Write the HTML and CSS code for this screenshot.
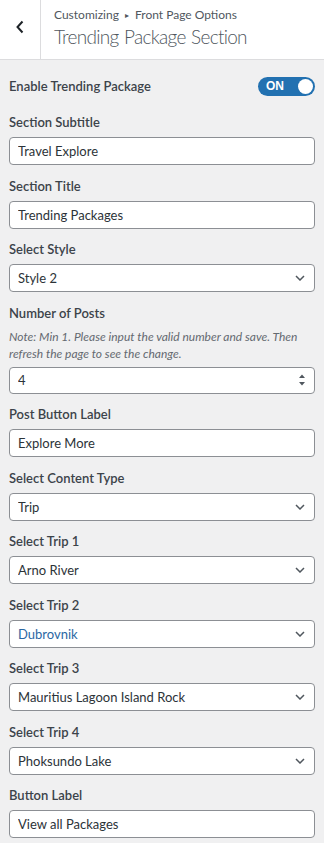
FILE: index.html
```html
<!DOCTYPE html>
<html lang="en">

<head>
    <meta charset="UTF-8">
    <meta name="viewport" content="width=device-width, initial-scale=1.0">
    <title>Trending Package Section</title>
    <link rel="stylesheet" href="styles.css">
</head>

<body>

    <div class="section-header">
        <button class="back-btn" aria-label="Back">
            <svg width="10" height="14" viewBox="0 0 10 14"><path d="M7.5 1.5 L2.5 7 L7.5 12.5" fill="none" stroke="#1d2327" stroke-width="2"/></svg>
        </button>
        <div class="section-title">
            <span class="crumb">Customizing <span class="sep">&#9656;</span> Front Page Options</span>
            <h3>Trending Package Section</h3>
        </div>
    </div>

    <div class="controls">

        <!-- toggle -->
        <div class="control toggle-row">
            <span class="label">Enable Trending Package</span>
            <span class="switch"><span class="switch-text">ON</span><span class="knob"></span></span>
        </div>

        <div class="control">
            <label class="label">Section Subtitle</label>
            <input class="field" type="text" value="Travel Explore">
        </div>

        <div class="control">
            <label class="label">Section Title</label>
            <input class="field" type="text" value="Trending Packages">
        </div>

        <div class="control">
            <label class="label">Select Style</label>
            <select class="field select"><option>Style 2</option></select>
        </div>

        <!-- number of posts -->
        <div class="control">
            <label class="label">Number of Posts</label>
            <p class="note">Note: Min 1. Please input the valid number and save. Then refresh the page to see the change.</p>
            <div class="field number-field">
                <input type="text" value="4">
                <svg class="spin" width="8" height="14" viewBox="0 0 8 14"><path d="M4 1.5 L7 5 L1 5 Z" fill="#50575e"/><path d="M4 12.5 L7 9 L1 9 Z" fill="#50575e"/></svg>
            </div>
        </div>

        <div class="control">
            <label class="label">Post Button Label</label>
            <input class="field" type="text" value="Explore More">
        </div>

        <div class="control">
            <label class="label">Select Content Type</label>
            <select class="field select"><option>Trip</option></select>
        </div>

        <div class="control">
            <label class="label">Select Trip 1</label>
            <select class="field select"><option>Arno River</option></select>
        </div>

        <div class="control">
            <label class="label">Select Trip 2</label>
            <select class="field select active"><option>Dubrovnik</option></select>
        </div>

        <div class="control">
            <label class="label">Select Trip 3</label>
            <select class="field select"><option>Mauritius Lagoon Island Rock</option></select>
        </div>

        <div class="control">
            <label class="label">Select Trip 4</label>
            <select class="field select"><option>Phoksundo Lake</option></select>
        </div>

        <div class="control">
            <label class="label">Button Label</label>
            <input class="field" type="text" value="View all Packages">
        </div>

    </div>

</body>

</html>
```

FILE: styles.css
```css
body {
    margin: 0;
    padding: 0;
    font-family: Lato, sans-serif;
    background-color: #f0f0f1;
    color: #3c434a;
}

.section-header {
    display: flex;
    height: 60px;
    background-color: #fff;
    border-bottom: 1px solid #dcdcde;
    box-sizing: border-box;
}

.back-btn {
    width: 41px;
    border: 0;
    border-right: 1px solid #dcdcde;
    background: #fff;
    padding: 0 0 6px 0;
    display: flex;
    align-items: center;
    justify-content: center;
}

.section-title {
    padding: 6px 0 0 13px;
}

.crumb {
    display: block;
    font-size: 12px;
    line-height: 18px;
    color: #50575e;
}

.crumb .sep {
    font-size: 8px;
    margin: 0 3px;
    vertical-align: 1px;
}

.section-title h3 {
    margin: 0;
    font-size: 19px;
    line-height: 26px;
    font-weight: 300;
    letter-spacing: -0.7px;
    word-spacing: 1px;
    color: #50575e;
}

.controls {
    padding: 16px 9px 0 9px;
}

.control {
    margin-bottom: 10.5px;
}

.label {
    display: block;
    font-size: 13px;
    line-height: 20px;
    font-weight: 600;
    margin-bottom: 5px;
    color: #3c434a;
}

.toggle-row {
    display: flex;
    justify-content: space-between;
    align-items: center;
    margin-bottom: 16px;
}

.toggle-row .label {
    margin: 0;
}

.switch {
    display: flex;
    align-items: center;
    justify-content: space-between;
    width: 57px;
    height: 19px;
    box-sizing: border-box;
    padding: 0 2px 0 8px;
    border-radius: 10px;
    background-color: #2271b1;
}

.switch-text {
    color: #fff;
    font-size: 12px;
    font-weight: 700;
    font-family: 'Liberation Sans', sans-serif;
}

.knob {
    width: 15px;
    height: 15px;
    border-radius: 50%;
    background: #fff;
}

.field {
    display: block;
    width: 100%;
    height: 28px;
    box-sizing: border-box;
    margin: 0;
    padding: 0 8px;
    border: 1px solid #8c8f94;
    border-radius: 4px;
    background-color: #fff;
    font-family: Lato, sans-serif;
    font-size: 13px;
    color: #2c3338;
    outline: none;
}

.select {
    -webkit-appearance: none;
    appearance: none;
    padding: 0 24px 0 8px;
    background-image: url("data:image/svg+xml;utf8,<svg xmlns='http://www.w3.org/2000/svg' width='10' height='6' viewBox='0 0 10 6'><path d='M1 1 L5 5 L9 1' fill='none' stroke='%2350575e' stroke-width='1.5'/></svg>");
    background-repeat: no-repeat;
    background-position: right 9px center;
}

.select.active {
    color: #2b67a3;
}

.note {
    margin: 0 0 5px 0;
    font-size: 12px;
    line-height: 17px;
    font-style: italic;
    color: #646970;
}

.number-field {
    display: flex;
    align-items: center;
    height: 27px;
    padding: 0 8px 0 0;
}

.number-field input {
    flex: 1;
    border: 0;
    outline: none;
    padding: 0 0 0 8px;
    height: 100%;
    background: transparent;
    font-family: Lato, sans-serif;
    font-size: 13px;
    color: #2c3338;
}
```
